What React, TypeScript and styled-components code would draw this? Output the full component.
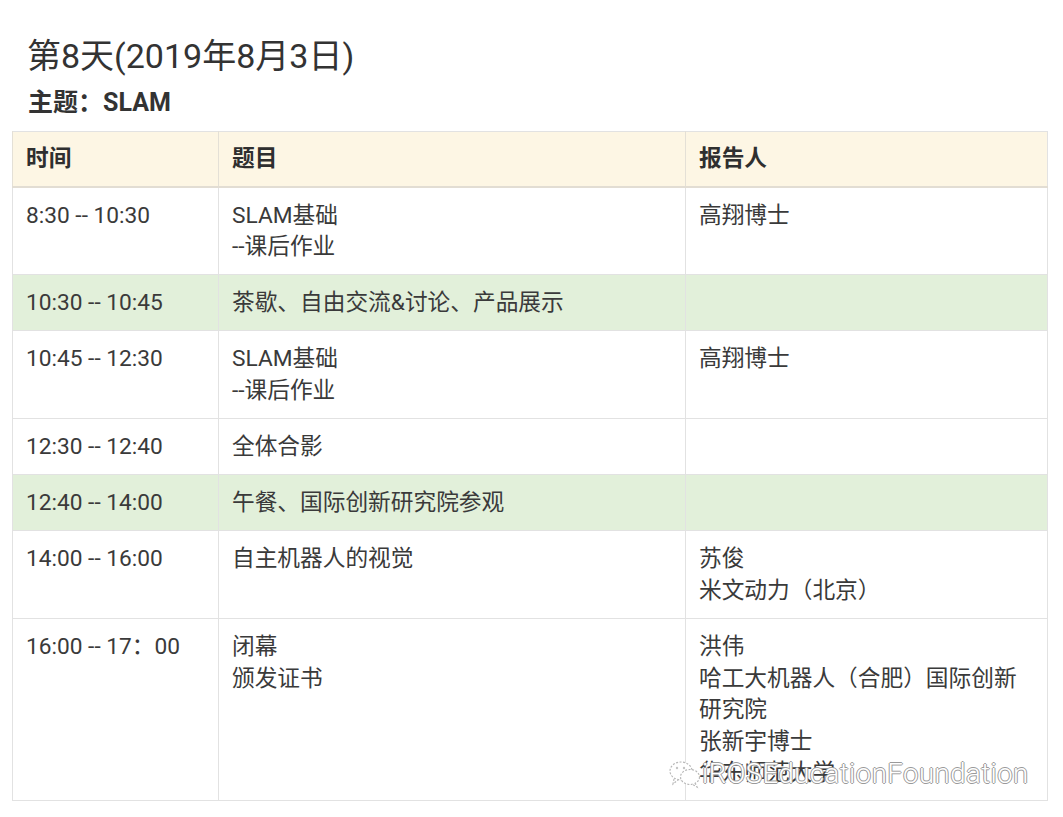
import React from "react";
import styled, { createGlobalStyle } from "styled-components";

const GlobalStyle = createGlobalStyle`
  html, body {
    margin: 0;
    padding: 0;
    background: #ffffff;
  }
  body {
    font-family: Roboto, "Noto Sans CJK SC", sans-serif;
    color: #333333;
  }
`;

type Row = {
  time: string;
  topic: string[];
  speaker: string[];
  green?: boolean;
};

const rows: Row[] = [
  { time: "8:30 -- 10:30", topic: ["SLAM基础", "--课后作业"], speaker: ["高翔博士"] },
  { time: "10:30 -- 10:45", topic: ["茶歇、自由交流&讨论、产品展示"], speaker: [], green: true },
  { time: "10:45 -- 12:30", topic: ["SLAM基础", "--课后作业"], speaker: ["高翔博士"] },
  { time: "12:30 -- 12:40", topic: ["全体合影"], speaker: [] },
  { time: "12:40 -- 14:00", topic: ["午餐、国际创新研究院参观"], speaker: [], green: true },
  { time: "14:00 -- 16:00", topic: ["自主机器人的视觉"], speaker: ["苏俊", "米文动力（北京）"] },
  {
    time: "16:00 -- 17：00",
    topic: ["闭幕", "颁发证书"],
    speaker: ["洪伟", "哈工大机器人（合肥）国际创新", "研究院", "张新宇博士", "华东师范大学"],
  },
];

const App: React.FC = () => {
  return (
    <>
      <GlobalStyle />
      <Page>
        <Title>第8天(2019年8月3日)</Title>
        <Subtitle>主题：SLAM</Subtitle>
        <TableWrap>
          <Schedule>
            <colgroup>
              <col style={{ width: 206 }} />
              <col style={{ width: 467 }} />
              <col />
            </colgroup>
            <thead>
              <tr>
                <Th>时间</Th>
                <Th>题目</Th>
                <Th>报告人</Th>
              </tr>
            </thead>
            <tbody>
              {rows.map((r, i) => (
                <Tr key={i} $green={r.green}>
                  <Td>{r.time}</Td>
                  <Td>
                    {r.topic.map((t) => (
                      <Line key={t}>{t}</Line>
                    ))}
                  </Td>
                  <Td>
                    {r.speaker.map((s) => (
                      <Line key={s}>{s}</Line>
                    ))}
                  </Td>
                </Tr>
              ))}
            </tbody>
          </Schedule>
          <Watermark>
            <WeChatMark />
            <WatermarkText>iROSEducationFoundation</WatermarkText>
          </Watermark>
        </TableWrap>
      </Page>
    </>
  );
};

const WeChatMark = () => (
  <svg width="34" height="30" viewBox="0 0 34 30" fill="none">
    <g stroke="#b8b8b8" strokeWidth="1.2" strokeDasharray="2 1.5">
      <ellipse cx="13" cy="12" rx="11" ry="9" fill="#fff" />
      <ellipse cx="22" cy="18" rx="9.5" ry="7.5" fill="#fff" />
      <path d="M6 20 L5 25 L10 21" fill="#fff" />
      <path d="M27 24 L29 28 L24 25" fill="#fff" />
    </g>
    <circle cx="9" cy="9" r="1.2" fill="#c4c4c4" />
    <circle cx="16" cy="9" r="1.2" fill="#c4c4c4" />
  </svg>
);

export default App;

const Page = styled.div`
  width: 1063px;
  padding: 34px 0 16px 0;
  box-sizing: border-box;
`;

const Title = styled.h1`
  margin: 0 0 0 27px;
  font-size: 34px;
  line-height: 44px;
  font-weight: 400;
  color: #333333;
`;

const Subtitle = styled.h2`
  margin: 10px 0 0 28px;
  font-size: 25px;
  line-height: 30px;
  font-weight: 700;
  color: #333333;
`;

const TableWrap = styled.div`
  position: relative;
  margin: 13px 0 0 12px;
  width: 1036px;
`;

const Schedule = styled.table`
  width: 100%;
  border-collapse: collapse;
  table-layout: fixed;
  border: 1px solid #e2e2e2;
  font-size: 22.7px;
  line-height: 31.6px;
  color: #3a3a3a;
`;

const Th = styled.th`
  background: #fdf6e4;
  text-align: left;
  font-weight: 700;
  padding: 11px 13px;
  border-left: 1px solid #e4e0d6;
  border-bottom: 2px solid #e2ddd3;
  color: #2f2f2f;
  vertical-align: top;
`;

const Tr = styled.tr<{ $green?: boolean }>`
  background: ${({ $green }) => ($green ? "#e2f0da" : "#ffffff")};
`;

const Td = styled.td`
  padding: 12px 13px 11.5px;
  border-left: 1px solid #e2e2e2;
  border-bottom: 1px solid #e2e2e2;
  vertical-align: top;
`;

const Line = styled.div`
  white-space: nowrap;
`;

const Watermark = styled.div`
  position: absolute;
  left: 656px;
  top: 626px;
  display: flex;
  align-items: center;
  gap: 0;
  pointer-events: none;
`;

const WatermarkText = styled.span`
  font-family: Roboto, sans-serif;
  font-weight: 300;
  font-size: 27.5px;
  letter-spacing: 0.5px;
  color: #ffffff;
  text-shadow: 1px 0 0 #9a9a9a, -1px 0 0 #9a9a9a, 0 1px 0 #9a9a9a, 0 -1px 0 #9a9a9a;
`;
